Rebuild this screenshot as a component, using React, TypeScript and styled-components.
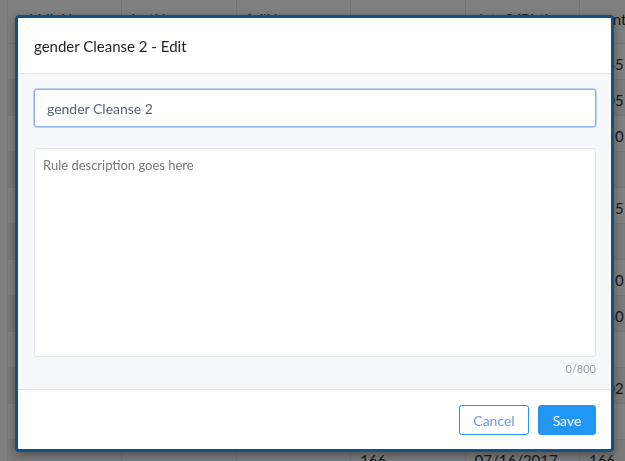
import { useEffect, useRef } from 'react';
import styled, { createGlobalStyle } from 'styled-components';

const GlobalStyle = createGlobalStyle`
    html, body {
        margin: 0;
        padding: 0;
        background: #ffffff;
        font-family: Lato, "Liberation Sans", sans-serif;
    }
    * {
        box-sizing: border-box;
    }
`

const columns = ['middleName', 'lastName', 'fullName', 'ssn', 'dateOfBirth', 'count'];

const rows: string[][] = [
    ['Lee', 'Adams', 'Lee Adams', '101', '01/02/2016', '1645'],
    ['Ann', 'Baker', 'Ann Baker', '102', '02/11/2016', '2305'],
    ['Ray', 'Clark', 'Ray Clark', '103', '03/09/2016', '3120'],
    ['Jo', 'Davis', 'Jo Davis', '104', '04/21/2016', '18'],
    ['Kim', 'Evans', 'Kim Evans', '105', '05/14/2016', '4415'],
    ['Max', 'Ford', 'Max Ford', '106', '06/30/2016', '17'],
    ['Sue', 'Green', 'Sue Green', '107', '07/08/2016', '2210'],
    ['Tom', 'Hall', 'Tom Hall', '108', '08/19/2016', '1980'],
    ['Amy', 'Irwin', 'Amy Irwin', '109', '09/05/2016', '19'],
    ['Bo', 'Jones', 'Bo Jones', '110', '10/27/2016', '3102'],
    ['Cy', 'King', 'Cy King', '111', '11/16/2016', '15'],
    ['', '', '', '166', '07/16/2017', '166'],
];

const Page = styled.div`
    width: 100vw;
    height: 100vh;
    overflow: hidden;
    padding-left: 7px;
`

const Table = styled.div`
    display: grid;
    grid-template-columns: repeat(6, 114.4px);
    border-left: 1px solid #e6e6e6;
`

const HeadCell = styled.div`
    height: 44px;
    padding: 10px 9px 0;
    font-size: 15px;
    color: #333;
    border-right: 1px solid #e6e6e6;
    border-bottom: 1px solid #e6e6e6;
    white-space: nowrap;
    overflow: hidden;
`

const Cell = styled.div<{ $striped: boolean }>`
    height: 36px;
    padding: 11px 9px 0;
    font-size: 15px;
    color: #333;
    background: ${p => (p.$striped ? '#f4f4f4' : '#ffffff')};
    border-right: 1px solid #e6e6e6;
    border-bottom: 1px solid #eeeeee;
    white-space: nowrap;
    overflow: hidden;
`

const Overlay = styled.div`
    position: fixed;
    inset: 0;
    background: rgba(0, 0, 0, 0.5);
    display: flex;
    align-items: flex-start;
    padding: 15px 0 0 15px;
`

const Modal = styled.div`
    width: 599px;
    height: 437px;
    background: #ffffff;
    border: 3px solid #17507f;
    border-radius: 4px;
    box-shadow: 0 3px 10px rgba(0, 0, 0, 0.35);
    display: flex;
    flex-direction: column;
    overflow: hidden;
`

const ModalHeader = styled.div`
    height: 56px;
    flex-shrink: 0;
    display: flex;
    align-items: center;
    padding: 0 16px;
    border-bottom: 1px solid #e3e5e9;
    font-size: 15px;
    color: #1f2329;
`

const ModalBody = styled.div`
    flex: 1;
    background: #f7f8fa;
    padding: 15px 15px 0 16px;
    display: flex;
    flex-direction: column;
`

const NameInput = styled.input`
    height: 38px;
    width: 100%;
    border: 1px solid #8db2ee;
    box-shadow: 0 0 0 1px rgba(141, 178, 238, 0.55);
    border-radius: 3px;
    background: #ffffff;
    padding: 0 12px;
    font-family: inherit;
    font-size: 14px;
    color: #5a6270;
    caret-color: #222;
    outline: none;
`

const Description = styled.textarea`
    margin-top: 21px;
    height: 209px;
    width: 100%;
    resize: none;
    border: 1px solid #e3e6ea;
    border-radius: 3px;
    background: #ffffff;
    padding: 8px 8px;
    font-family: inherit;
    font-size: 13px;
    color: #555;
    outline: none;

    &::placeholder {
        color: #787878;
    }
`

const Counter = styled.div`
    text-align: right;
    font-size: 11px;
    color: #9a9ea5;
    padding-top: 5px;
`

const ModalFooter = styled.div`
    height: 60px;
    flex-shrink: 0;
    border-top: 1px solid #e3e5e9;
    display: flex;
    justify-content: flex-end;
    align-items: flex-start;
    gap: 9px;
    padding: 15px 15px 0;
`

const Button = styled.button<{ $primary?: boolean }>`
    height: 30px;
    width: ${p => (p.$primary ? '58px' : '70px')};
    border-radius: 3px;
    font-family: inherit;
    font-size: 14px;
    cursor: pointer;
    border: 1px solid #2196f3;
    background: ${p => (p.$primary ? '#2196f3' : '#ffffff')};
    color: ${p => (p.$primary ? '#ffffff' : '#6f9de4')};
`

function App() {
    const inputRef = useRef<HTMLInputElement>(null);

    useEffect(() => {
        const el = inputRef.current;
        if (el) {
            el.focus();
            el.setSelectionRange(el.value.length, el.value.length);
        }
    }, []);

    return (
        <>
            <GlobalStyle />
            <Page>
                <Table>
                    {columns.map(c => (
                        <HeadCell key={c}>{c}</HeadCell>
                    ))}
                    {rows.map((r, i) =>
                        r.map((v, j) => (
                            <Cell key={`${i}-${j}`} $striped={i % 2 === 1}>{v}</Cell>
                        ))
                    )}
                </Table>
            </Page>

            <Overlay>
                <Modal>
                    <ModalHeader>gender Cleanse 2 - Edit</ModalHeader>
                    <ModalBody>
                        <NameInput ref={inputRef} defaultValue="gender Cleanse 2" />
                        <Description placeholder="Rule description goes here" maxLength={800} />
                        <Counter>0/800</Counter>
                    </ModalBody>
                    <ModalFooter>
                        <Button>Cancel</Button>
                        <Button $primary>Save</Button>
                    </ModalFooter>
                </Modal>
            </Overlay>
        </>
    )
}

export default App
